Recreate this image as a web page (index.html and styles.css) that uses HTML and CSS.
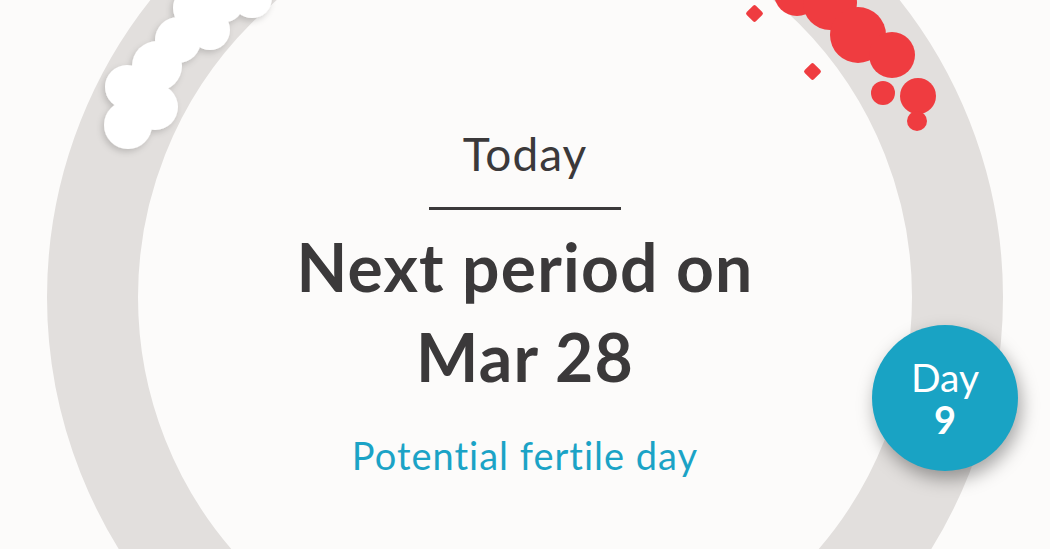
FILE: index.html
```html
<!DOCTYPE html>
<html lang="en">
<head>
  <meta charset="UTF-8">
  <meta name="viewport" content="width=device-width, initial-scale=1.0">
  <title>Cycle - Today</title>
  <link rel="stylesheet" href="styles.css">
</head>
<body>
  <div id="stage">
    <svg class="cycleRing" viewBox="0 0 1050 549" width="1050" height="549">
      <defs>
        <filter id="blobShadow" x="-20%" y="-20%" width="140%" height="140%">
          <feDropShadow dx="-2" dy="3" stdDeviation="3" flood-color="#000" flood-opacity="0.16"/>
        </filter>
      </defs>
      <circle cx="525" cy="297" r="432.5" fill="none" stroke="#e2dfdd" stroke-width="91"/>

      <!-- past days -->
      <g fill="#ffffff" filter="url(#blobShadow)">
        <circle cx="252" cy="-2" r="20"/>
        <circle cx="225" cy="4" r="18"/>
        <circle cx="195" cy="8" r="22"/>
        <circle cx="210" cy="30" r="20"/>
        <circle cx="178" cy="40" r="23"/>
        <circle cx="157" cy="66" r="25"/>
        <circle cx="127" cy="87" r="22"/>
        <circle cx="155" cy="107" r="23"/>
        <circle cx="128" cy="125" r="24"/>
      </g>

      <!-- period days -->
      <g fill="#ef3c40">
        <circle cx="797" cy="-7" r="23"/>
        <circle cx="830" cy="3" r="27"/>
        <circle cx="858" cy="35" r="28"/>
        <circle cx="892" cy="55" r="23"/>
        <circle cx="883" cy="93" r="12"/>
        <circle cx="918" cy="96" r="18"/>
        <circle cx="917" cy="121" r="10"/>
        <rect x="748" y="7" width="13" height="13" rx="2" transform="rotate(45 754.5 13.5)"/>
        <rect x="806" y="65" width="13" height="13" rx="2" transform="rotate(45 812.5 71.5)"/>
      </g>
    </svg>

    <div class="summary">
      <div class="today">Today</div>
      <div class="divider"></div>
      <h1 class="nextPeriod">Next period on<br>Mar 28</h1>
      <p class="fertile">Potential fertile day</p>
    </div>

    <div class="dayBadge">
      <span class="dayLabel">Day</span>
      <span class="dayNumber">9</span>
    </div>
  </div>
</body>
</html>
```

FILE: styles.css
```css
body {
  background-color: #fcfbfa;
  color: #3b393a;
  font-family: 'Lato', 'Liberation Sans', sans-serif;
  font-variant-ligatures: none;
  margin: 0;
  padding: 0;
}
#stage {
  position: relative;
  width: 1050px;
  height: 549px;
  overflow: hidden;
}
.cycleRing {
  position: absolute;
  left: 0;
  top: 0;
}
.summary {
  position: relative;
  display: flex;
  flex-direction: column;
  align-items: center;
  padding-top: 127px;
  text-align: center;
}
.today {
  font-size: 46px;
  line-height: 54px;
  font-weight: 400;
  letter-spacing: 1px;
}
.divider {
  width: 192px;
  height: 3px;
  margin-top: 26px;
  background-color: #3b393a;
}
.nextPeriod {
  margin: 12px 0 0;
  font-size: 66px;
  line-height: 90px;
  font-weight: 700;
  letter-spacing: 1.2px;
}
.fertile {
  margin: 30px 0 0;
  font-size: 38px;
  line-height: 46px;
  letter-spacing: 1px;
  color: #1ba3c6;
}
.dayBadge {
  position: absolute;
  left: 872px;
  top: 325px;
  width: 146px;
  height: 146px;
  border-radius: 50%;
  background-color: #19a3c4;
  color: #ffffff;
  display: flex;
  flex-direction: column;
  align-items: center;
  justify-content: center;
  box-shadow: 3px 8px 18px rgba(0, 0, 0, 0.35);
}
.dayLabel {
  font-size: 39px;
  line-height: 42px;
}
.dayNumber {
  font-size: 38px;
  line-height: 42px;
  font-weight: 700;
}
```
